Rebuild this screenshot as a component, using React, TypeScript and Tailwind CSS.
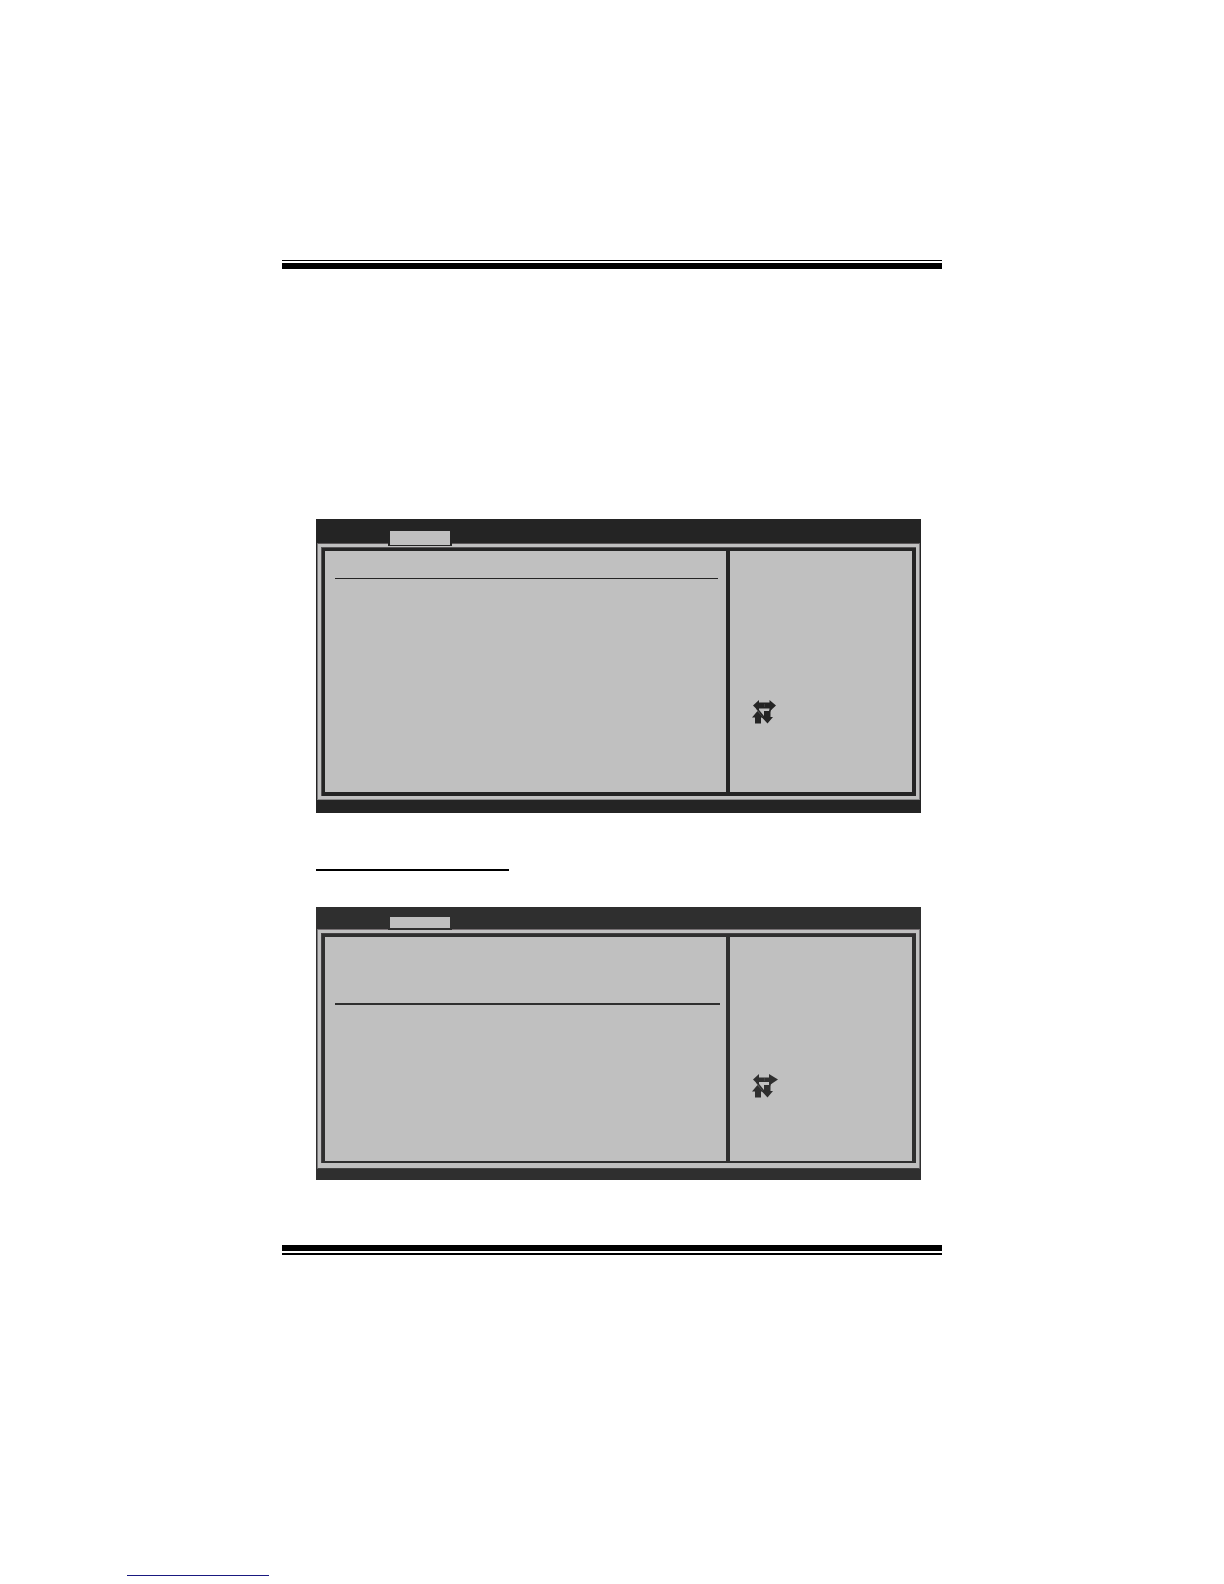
type PanelProps = { variant: 'main' | 'sub' };

const themes = {
  main: {
    shell: 'bg-[#242424]',
    header: 'h-6 pt-3',
    tab: 'h-[15px] border-b border-[#242424]',
    outer: 'border-t-[#5c585a] border-b-[#8a8a8a] border-x-[#777577] p-[3px]',
    inner: 'border-[#242424] border-b-4',
    outline: 'border-[#565456]',
    body: 'h-[241px]',
    rule: 'mt-[27px] mr-2 border-t border-[#242424]',
    divider: 'border-[#242424]',
    icon: 'pt-[149px] text-[#242424]',
    footer: 'h-[13px]',
  },
  sub: {
    shell: 'bg-[#2f2f2f]',
    header: 'h-[22px] pt-[10px]',
    tab: 'h-[13px] border-b-2 border-[#2f2f2f]',
    outer: 'border-t-[#777174] border-b-[#444444] border-x-[#777577] px-[3px] pt-[3px] pb-[5px]',
    inner: 'border-[#2f2f2f] border-b-2',
    outline: 'border-[#444244]',
    body: 'h-[224px]',
    rule: 'mt-[66px] mr-[6px] border-t-2 border-[#2f2f2f]',
    divider: 'border-[#2f2f2f]',
    icon: 'pt-[137px] text-[#2f2f2f]',
    footer: 'h-[11px]',
  },
};

function KeyArrows({ wide }: { wide: boolean }) {
  return (
    <svg width="26" height="25" viewBox="0 0 26 25" fill="currentColor" aria-hidden="true">
      {wide ? (
        <path d="M1 5.500 7 0v3.500H17V0l9 5.500-9 6V8H7v3.500Z" />
      ) : (
        <path d="M1 5.500 7 0v2.500H17.500V0L24 5.500l-6.500 6V8.500H7v3Z" />
      )}
      <path d="M5.500 11 11.500 17.500H9v6H3v-6H0Z" />
      <path d="M12 11h6.500v6H21l-5.500 6.500L9.500 17H12Z" />
      <path d="m4.500 8 8 10" stroke="currentColor" strokeWidth="1.600" />
      <path d="m19 8.500-2 4" stroke="currentColor" strokeWidth="1.500" />
      <path d="M12.500 4v3" stroke="#555" strokeWidth=".5" />
    </svg>
  );
}

function BiosPanel({ variant }: PanelProps) {
  const t = themes[variant];
  return (
    <section className={`${t.shell} px-px`}>
      <header className={`${t.header} relative z-10 pl-[71px]`}>
        <button
          type="button"
          aria-label="Selected menu"
          className={`${t.tab} block w-16 border-x-2 bg-[#c0c0c0]`}
        />
      </header>
      <div className={`${t.outer} border bg-[#c0c0c0]`}>
        <div className={`${t.outline} border-t border-l`}>
          <div
            className={`${t.inner} grid grid-cols-[401fr_186fr] border-t-[3px] border-r-4 border-l-[3px]`}
          >
            <div className={`${t.body} pl-[10px]`}>
              <hr className={t.rule} />
            </div>
            <aside className={`${t.divider} ${t.icon} border-l-4 pl-[22px]`}>
              <KeyArrows wide={variant === 'sub'} />
            </aside>
          </div>
        </div>
      </div>
      <footer className={t.footer} />
    </section>
  );
}

export default function App() {
  return (
    <div className="bg-white pb-2 font-['Liberation_Sans',sans-serif]">
      <main className="mx-auto max-w-[660px] pt-[260px]">
        <div className="h-[9px] border-t border-b-[6px] border-black" />
        <div className="pt-[250px] pr-[21px] pl-[34px]">
          <BiosPanel variant="main" />
          <hr className="mt-14 mb-9 w-[193px] border-t-2 border-black" />
          <BiosPanel variant="sub" />
        </div>
        <div className="mt-[65px] h-[10px] border-t-[6px] border-b-2 border-black" />
      </main>
      <a
        href="#"
        aria-label="Source website"
        className="mt-[304px] ml-[127px] block h-[17px] w-[142px] border-b border-[#191980]"
      />
    </div>
  );
}
